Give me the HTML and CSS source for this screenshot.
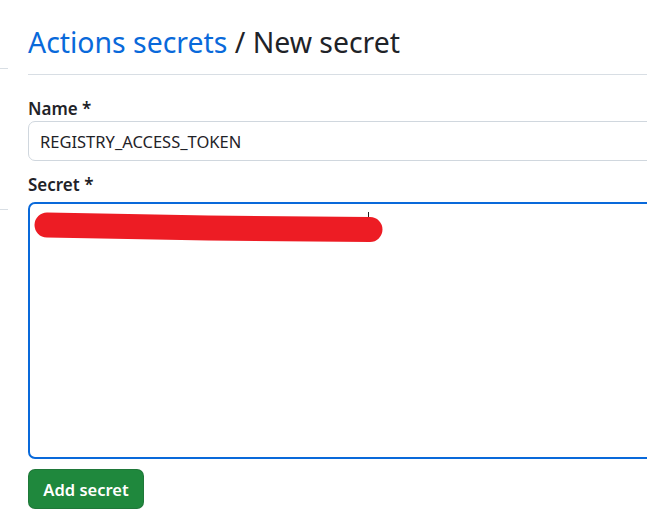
FILE: index.html
```html
<!DOCTYPE html>
<html lang="en">
<head>
<meta charset="utf-8">
<title>Actions secrets / New secret</title>
<link rel="stylesheet" href="styles.css">
</head>
<body>
<div class="layout">
  <nav class="sidebar">
    <div class="side-item side-first"></div>
    <div class="side-item side-second"></div>
  </nav>
  <main class="main">
    <div class="subhead">
      <h2 class="subhead-heading"><a class="crumb" href="#">Actions secrets</a> / New secret</h2>
    </div>
    <form class="form">
      <div class="field field-name">
        <label class="label" for="name">Name *</label>
        <input class="input" id="name" type="text" value="REGISTRY_ACCESS_TOKEN">
      </div>
      <div class="field field-secret">
        <label class="label" for="secret">Secret *</label>
        <div class="textarea-wrap">
          <textarea class="textarea" id="secret"></textarea>
          <svg class="scribble" width="380" height="50" viewBox="0 0 380 50" aria-hidden="true">
            <path d="M19 23 L100 24.5 L180 26 L342 27.5" fill="none" stroke="#ed1c24" stroke-width="25" stroke-linecap="round" stroke-linejoin="round"/>
            <line x1="340.5" y1="10" x2="340.5" y2="15" stroke="#222" stroke-width="1"/>
          </svg>
        </div>
      </div>
      <button class="btn-primary" type="button">Add secret</button>
    </form>
  </main>
</div>
</body>
</html>
```

FILE: styles.css
```css
* { box-sizing: border-box; }

html, body {
  margin: 0;
  padding: 0;
  background: #ffffff;
  overflow: hidden;
}

body {
  font-family: "Noto Sans", "Liberation Sans", sans-serif;
  color: #1f2328;
  width: 647px;
  height: 515px;
}

.layout {
  display: flex;
  gap: 20px;
}

.sidebar {
  width: 8px;
  flex: none;
}

.side-item {
  border-bottom: 1px solid #d8dee4;
}

.side-first { height: 69px; }
.side-second { height: 141px; }

.main {
  flex: none;
  width: 760px;
}

.subhead {
  padding-top: 22px;
  border-bottom: 1px solid #d8dee4;
  height: 75px;
}

.subhead-heading {
  margin: 0;
  font-size: 28.4px;
  font-weight: 400;
  line-height: 40px;
}

.crumb {
  color: #0969da;
  text-decoration: none;
}

.form {
  display: flex;
  flex-direction: column;
  padding-top: 22px;
}

.field {
  display: flex;
  flex-direction: column;
}

.field-name {
  gap: 0;
  margin-bottom: 12px;
}

.field-secret {
  gap: 5px;
  margin-bottom: 10px;
}

.label {
  font-size: 17px;
  font-weight: 600;
  line-height: 24px;
}

.input {
  height: 40px;
  border: 1px solid #d0d7de;
  border-radius: 7px;
  padding: 0 11px;
  font-family: inherit;
  font-size: 16.5px;
  color: #1f2328;
  background: #fff;
}

.textarea-wrap {
  position: relative;
}

.textarea {
  display: block;
  width: 100%;
  height: 257px;
  border: 2px solid #0969da;
  border-radius: 7px;
  resize: none;
  background: #fff;
}

.scribble {
  position: absolute;
  left: 0;
  top: 0;
}

.btn-primary {
  align-self: flex-start;
  height: 40px;
  width: 116px;
  border: 1px solid rgba(31, 35, 40, 0.15);
  border-radius: 7px;
  background: #1f883d;
  color: #fff;
  font-family: inherit;
  font-size: 16.5px;
  font-weight: 600;
  padding: 0;
}
```
